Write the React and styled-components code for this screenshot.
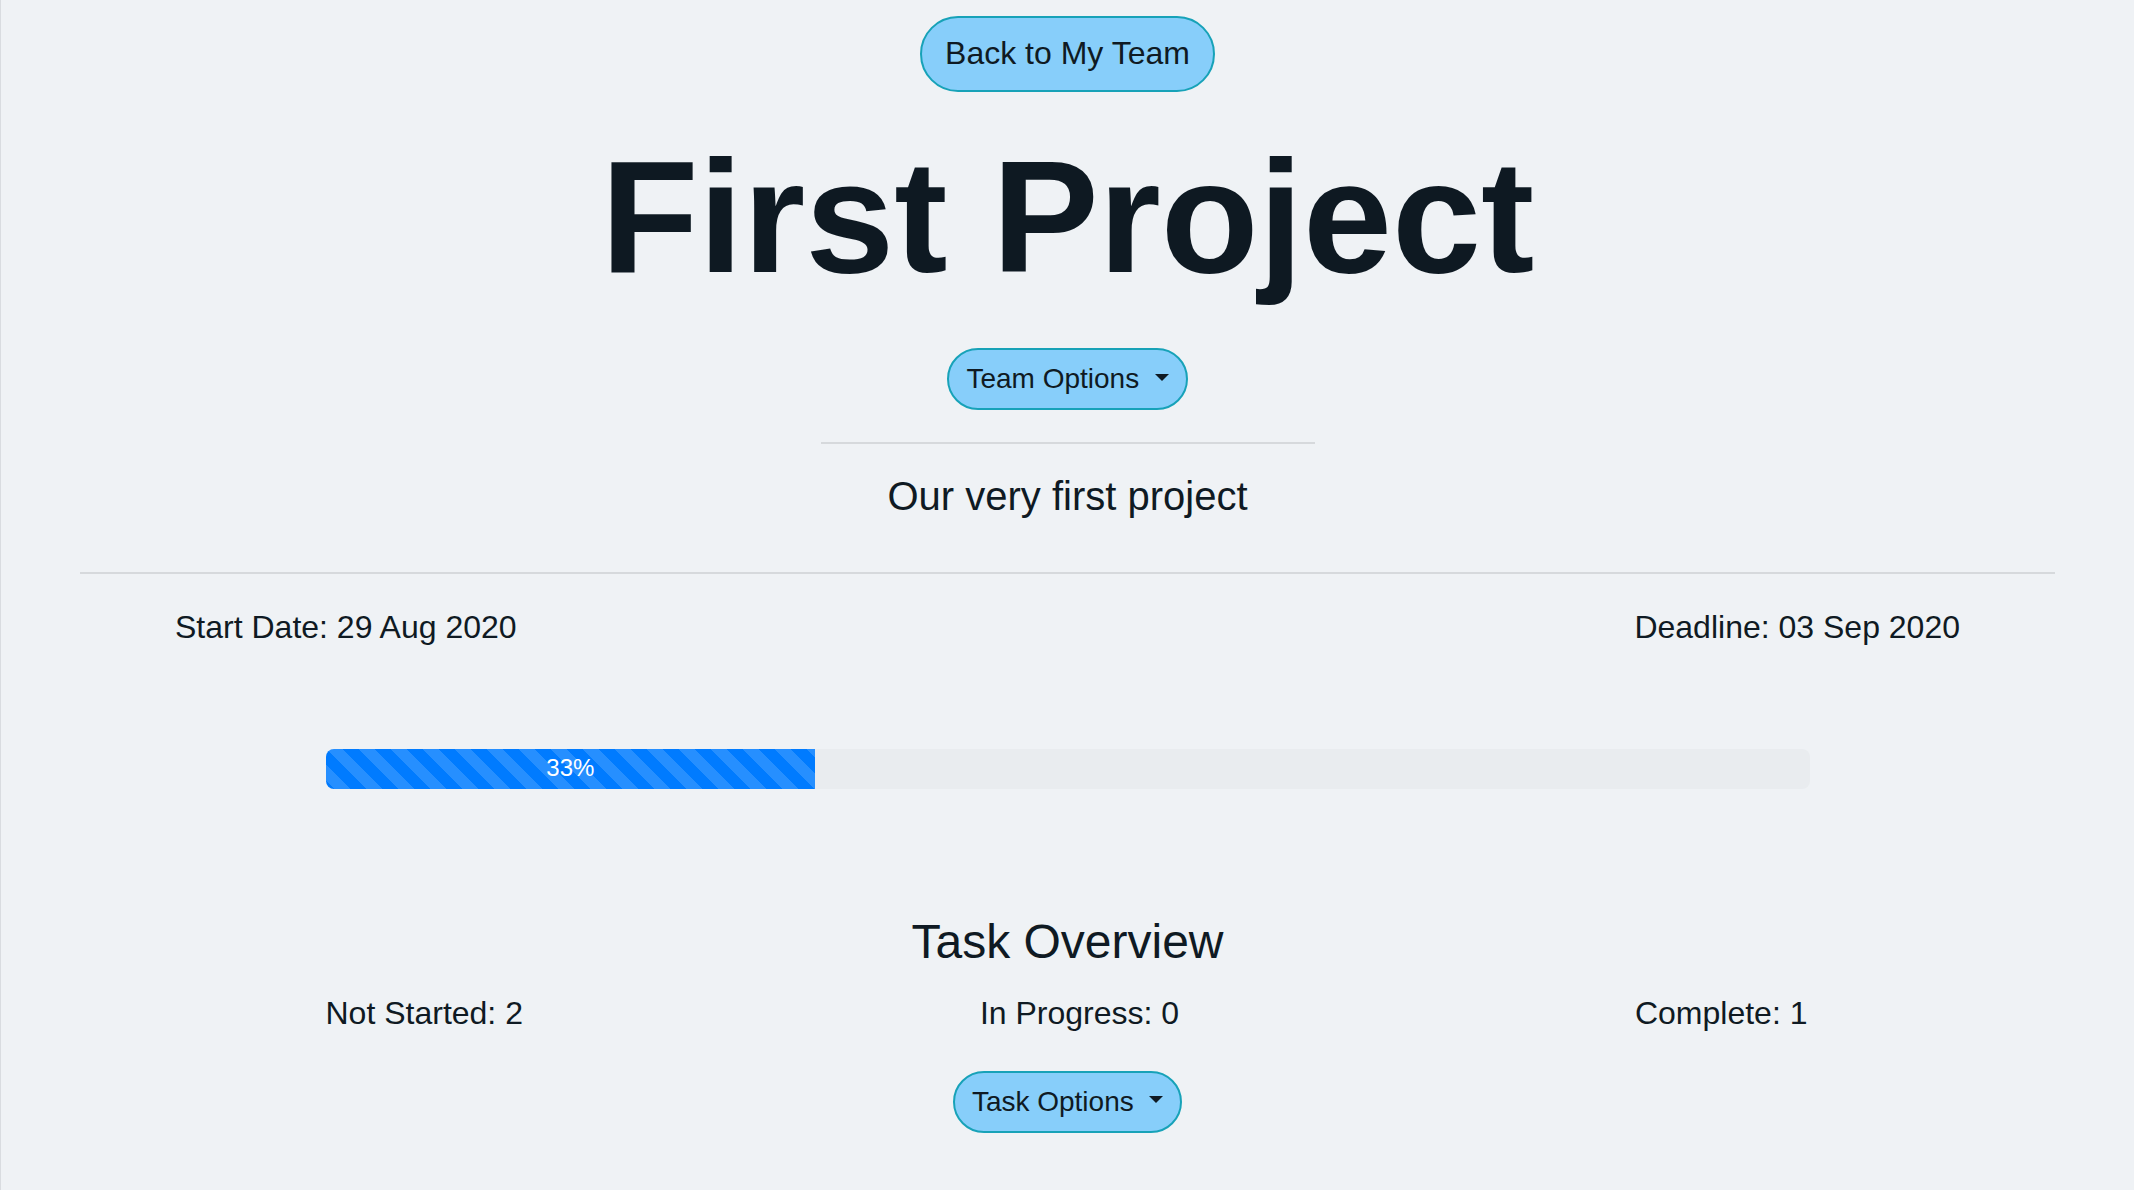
import React from 'react';
import styled, { createGlobalStyle } from 'styled-components';

const ink = '#0f1a23';
const pageBg = '#eff2f5';

const GlobalStyle = createGlobalStyle`
  html, body {
    margin: 0;
    padding: 0;
    background: ${pageBg};
  }
  body {
    font-family: "Liberation Sans", Arial, Helvetica, sans-serif;
    color: ${ink};
  }
`;

const Page = styled.main`
  min-height: 1190px;
  box-sizing: border-box;
  padding: 16px 79px 0;
  border-left: 1px solid #d9dce0;
  display: flex;
  flex-direction: column;
  align-items: center;
`;

const PillButton = styled.button`
  font-family: inherit;
  color: ${ink};
  background: #87cefa;
  border: 2px solid #17a2b8;
  border-radius: 999px;
  cursor: pointer;
  font-size: ${({ $small }) => ($small ? '28px' : '32px')};
  line-height: 1.5;
  padding: ${({ $small }) => ($small ? '8px 17px' : '11px 23px 13px')};
  margin-top: ${({ $mt }) => $mt || 0}px;

  &.dropdown::after {
    content: '';
    display: inline-block;
    margin-left: 0.55em;
    vertical-align: 0.27em;
    border-top: 0.28em solid ${ink};
    border-left: 0.28em solid transparent;
    border-right: 0.28em solid transparent;
  }
`;

const Title = styled.h1`
  margin: 28px 0 0;
  font-size: 160px;
  line-height: 1.215;
  font-weight: 700;
  color: #0e1922;
`;

const ShortRule = styled.hr`
  width: 494px;
  margin: 32px 0 0;
  border: 0;
  border-top: 2px solid #d6d9dc;
`;

const WideRule = styled.hr`
  align-self: stretch;
  margin: 52px 0 0;
  border: 0;
  border-top: 2px solid #d6d9dc;
`;

const Subtitle = styled.h5`
  margin: 28px 0 0;
  font-size: 40px;
  line-height: 1.2;
  font-weight: 400;
`;

const DateRow = styled.div`
  align-self: stretch;
  display: flex;
  justify-content: space-between;
  padding: 0 95px;
  margin-top: 29px;
  font-size: 32px;
  line-height: 1.5;
`;

const Track = styled.div`
  width: 1484px;
  height: 40px;
  margin-top: 98px;
  background: #e9ecef;
  border-radius: 8px;
  overflow: hidden;
  display: flex;
`;

const Fill = styled.div`
  height: 100%;
  background-color: #007bff;
  background-image: linear-gradient(
    45deg,
    rgba(255, 255, 255, 0.15) 25%,
    transparent 25%,
    transparent 50%,
    rgba(255, 255, 255, 0.15) 50%,
    rgba(255, 255, 255, 0.15) 75%,
    transparent 75%,
    transparent
  );
  background-size: 32px 32px;
  color: #fff;
  font-size: 24px;
  line-height: 38px;
  text-align: center;
`;

const SectionTitle = styled.h4`
  margin: 124px 0 0;
  font-size: 48px;
  line-height: 1.2;
  font-weight: 400;
`;

const CountRow = styled.div`
  width: 1484px;
  display: grid;
  grid-template-columns: repeat(3, 1fr);
  margin-top: 18px;
  font-size: 32px;
  line-height: 1.5;
`;

const Count = styled.span`
  text-align: ${({ $align }) => $align};
  padding: ${({ $align }) => ($align === 'center' ? '0 0 0 24px' : '0 2px 0 0')};
`;

const progress = 33;

export default function App() {
  return (
    <>
      <GlobalStyle />
      <Page>
        <PillButton>Back to My Team</PillButton>
        <Title>First Project</Title>
        <PillButton $small $mt={34} className="dropdown">
          Team Options
        </PillButton>
        <ShortRule />
        <Subtitle>Our very first project</Subtitle>
        <WideRule />
        <DateRow>
          <span>Start Date: 29 Aug 2020</span>
          <span>Deadline: 03 Sep 2020</span>
        </DateRow>
        <Track>
          <Fill style={{ width: `${progress}%` }}>{progress}%</Fill>
        </Track>
        <SectionTitle>Task Overview</SectionTitle>
        <CountRow>
          <Count $align="left">Not Started: 2</Count>
          <Count $align="center">In Progress: 0</Count>
          <Count $align="right">Complete: 1</Count>
        </CountRow>
        <PillButton $small $mt={34} className="dropdown">
          Task Options
        </PillButton>
      </Page>
    </>
  );
}
